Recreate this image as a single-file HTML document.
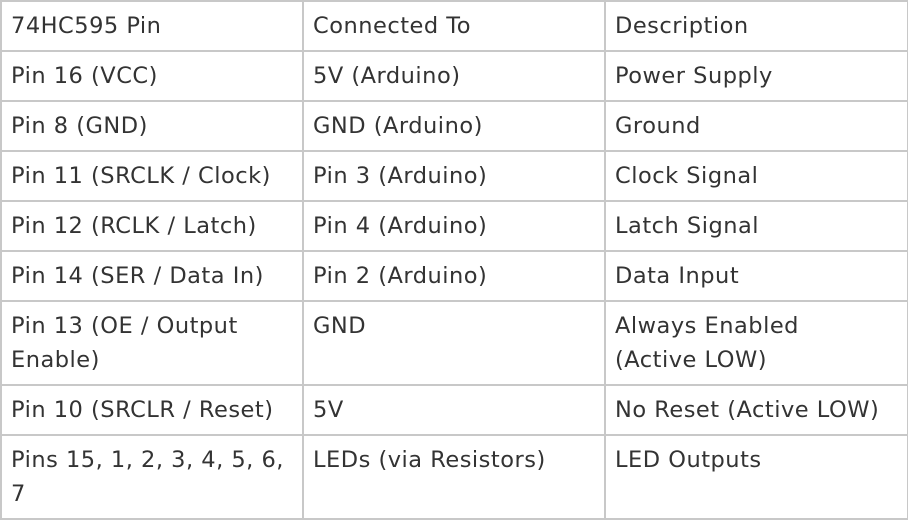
<!DOCTYPE html>
<html><head><style>
html,body{margin:0;padding:0;background:#fff;}
table{border-collapse:collapse;width:907px;table-layout:fixed;font-family:"DejaVu Sans","Liberation Sans",sans-serif;font-size:22.5px;letter-spacing:0.5px;color:#333;}
td{border:2px solid #c8c8c8;padding:7px 6px 7px 9px;line-height:34px;vertical-align:top;white-space:nowrap;overflow:hidden;}
</style></head><body>
<table>
<colgroup><col style="width:302px"><col style="width:302px"><col style="width:303px"></colgroup>
<tr><td>74HC595 Pin</td><td>Connected To</td><td>Description</td></tr>
<tr><td>Pin 16 (VCC)</td><td>5V (Arduino)</td><td>Power Supply</td></tr>
<tr><td>Pin 8 (GND)</td><td>GND (Arduino)</td><td>Ground</td></tr>
<tr><td>Pin 11 (SRCLK / Clock)</td><td>Pin 3 (Arduino)</td><td>Clock Signal</td></tr>
<tr><td>Pin 12 (RCLK / Latch)</td><td>Pin 4 (Arduino)</td><td>Latch Signal</td></tr>
<tr><td>Pin 14 (SER / Data In)</td><td>Pin 2 (Arduino)</td><td>Data Input</td></tr>
<tr><td>Pin 13 (OE / Output<br>Enable)</td><td>GND</td><td>Always Enabled<br>(Active LOW)</td></tr>
<tr><td>Pin 10 (SRCLR / Reset)</td><td>5V</td><td>No Reset (Active LOW)</td></tr>
<tr><td>Pins 15, 1, 2, 3, 4, 5, 6,<br>7</td><td>LEDs (via Resistors)</td><td>LED Outputs</td></tr>
</table>
</body></html>
